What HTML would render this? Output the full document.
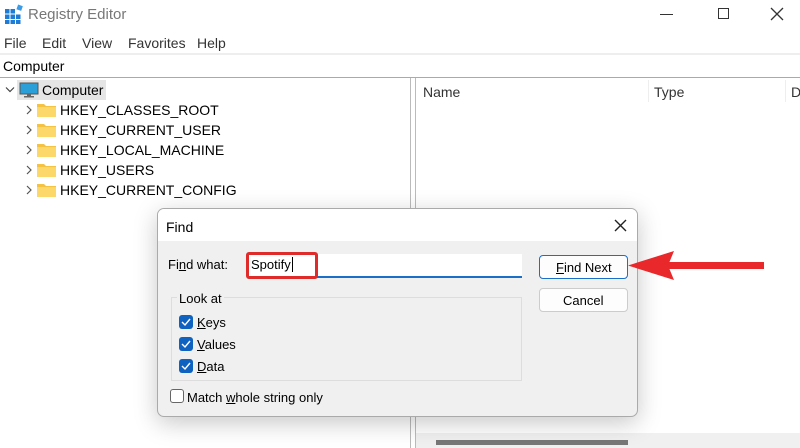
<!DOCTYPE html>
<html><head><meta charset="utf-8"><style>
*{margin:0;padding:0;box-sizing:border-box}
body{width:800px;height:448px;overflow:hidden;background:#fff;font-family:"Liberation Sans",sans-serif;position:relative;color:#000}
.a{position:absolute}
.t{font-size:14px;white-space:nowrap}
.u{text-decoration:underline}
</style></head><body>
<svg class="a" style="left:4px;top:4px" width="20" height="20" viewBox="0 0 20 20">
<g fill="#1e7bd6"><rect x="1" y="5" width="4.5" height="4.5"/><rect x="6.5" y="5" width="4.5" height="4.5"/><rect x="1" y="10.5" width="4.5" height="4.5"/><rect x="6.5" y="10.5" width="4.5" height="4.5"/><rect x="12" y="10.5" width="4.5" height="4.5"/><rect x="1" y="16" width="4.5" height="4"/><rect x="6.5" y="16" width="4.5" height="4"/><rect x="12" y="16" width="4.5" height="4"/></g>
<rect x="13" y="1" width="5" height="5" fill="#3a9be8" transform="rotate(20 15 4)"/></svg>
<div class="a t" style="left:28px;top:6px;font-size:15px;color:#777">Registry Editor</div>
<div class="a" style="left:660px;top:14px;width:13px;height:1px;background:#333"></div>
<div class="a" style="left:718px;top:8px;width:11px;height:11px;border:1px solid #333"></div>
<svg class="a" style="left:770px;top:7px" width="14" height="14"><path d="M1 1L13 13M13 1L1 13" stroke="#333" stroke-width="1.3"/></svg>
<div class="a t" style="left:4px;top:35px;color:#333">File</div>
<div class="a t" style="left:42px;top:35px;color:#333">Edit</div>
<div class="a t" style="left:82px;top:35px;color:#333">View</div>
<div class="a t" style="left:128px;top:35px;color:#333">Favorites</div>
<div class="a t" style="left:197px;top:35px;color:#333">Help</div>
<div class="a" style="left:0;top:53px;width:800px;height:2px;background:#eee"></div>
<div class="a t" style="left:3px;top:58px">Computer</div>
<div class="a" style="left:0;top:77px;width:800px;height:1px;background:#aaa"></div>
<svg class="a" style="left:5px;top:86px" width="10" height="8"><path d="M1 1.5L5 5.5L9 1.5" stroke="#444" stroke-width="1.2" fill="none"/></svg>
<div class="a" style="left:17px;top:80px;width:89px;height:20px;background:#e5e5e5"></div>
<svg class="a" style="left:19px;top:82px" width="20" height="16"><rect x="1" y="1" width="18" height="11" fill="#2a9fd8" stroke="#555" stroke-width="1"/><rect x="8" y="12" width="4" height="2" fill="#666"/><rect x="5" y="14" width="10" height="1.5" fill="#666"/></svg>
<div class="a t" style="left:42px;top:82px">Computer</div>
<div id="tree"></div>
<div class="a" style="left:410px;top:78px;width:1px;height:370px;background:#bbb"></div>
<div class="a" style="left:415px;top:78px;width:1px;height:370px;background:#bbb"></div>
<div class="a t" style="left:423px;top:84px;color:#333">Name</div>
<div class="a" style="left:648px;top:80px;width:1px;height:22px;background:#eee"></div>
<div class="a t" style="left:654px;top:84px;color:#333">Type</div>
<div class="a" style="left:785px;top:80px;width:1px;height:22px;background:#eee"></div>
<div class="a t" style="left:791px;top:84px;color:#333">D</div>
<div class="a" style="left:416px;top:433px;width:384px;height:15px;background:#f0f0f0"></div>
<div class="a" style="left:436px;top:440px;width:192px;height:5px;background:#777"></div>
<div class="a" style="left:157px;top:208px;width:481px;height:209px;background:#f0f0f0;border:1px solid #aaa;border-radius:7px;box-shadow:0 6px 24px rgba(0,0,0,.22);overflow:hidden">
 <div class="a" style="left:0;top:0;width:100%;height:32px;background:#fff"></div>
 <div class="a t" style="left:8px;top:10px">Find</div>
 <svg class="a" style="left:456px;top:10px" width="13" height="13"><path d="M1 1L12 12M12 1L1 12" stroke="#222" stroke-width="1.4"/></svg>
 <div class="a t" style="left:10px;top:48px;font-size:13px">Fi<span class="u">n</span>d what:</div>
 <div class="a" style="left:90px;top:45px;width:274px;height:24px;background:#fff;border-bottom:2px solid #1a6fc7"></div>
 <div class="a" style="left:88px;top:43px;width:72px;height:27px;border:3px solid #e02b2b;border-radius:3px"></div>
 <div class="a t" style="left:93px;top:48px;font-size:13px">Spotify<span style="border-left:1px solid #000;margin-left:1px"></span></div>
 <div class="a" style="left:13px;top:88px;width:351px;height:84px;border:1px solid #ddd"></div>
 <div class="a t" style="left:19px;top:82px;font-size:13px;background:#f0f0f0;padding:0 2px">Look at</div>
 <div id="cb"></div>
 <div class="a" style="left:12px;top:180px;width:14px;height:14px;border:1px solid #666;border-radius:3px;background:#fff"></div>
 <div class="a t" style="left:29px;top:181px;font-size:13px">Match <span class="u">w</span>hole string only</div>
 <div class="a" style="left:381px;top:46px;width:89px;height:24px;border:1px solid #1a6fc7;border-radius:4px;background:#fdfdfd"></div>
 <div class="a t" style="left:398px;top:51px;font-size:13px"><span class="u">F</span>ind Next</div>
 <div class="a" style="left:381px;top:79px;width:89px;height:24px;border:1px solid #ccc;border-radius:4px;background:#fdfdfd"></div>
 <div class="a t" style="left:405px;top:84px;font-size:13px">Cancel</div>
</div>
<svg class="a" style="left:628px;top:248px" width="140" height="36"><rect x="40" y="14" width="96" height="7" fill="#e8282b"/><polygon points="0,17.5 46,3 40,17.5 46,32" fill="#e8282b"/></svg>
<script>
var n=["HKEY_CLASSES_ROOT","HKEY_CURRENT_USER","HKEY_LOCAL_MACHINE","HKEY_USERS","HKEY_CURRENT_CONFIG"],h="";
n.forEach(function(s,i){var y=100+i*20;
h+='<svg class="a" style="left:25px;top:'+(y+5)+'px" width="8" height="10"><path d="M2 1L6 5L2 9" stroke="#555" stroke-width="1.2" fill="none"/></svg>';
h+='<svg class="a" style="left:37px;top:'+(y+3)+'px" width="19" height="14"><path d="M0 1h7l2 2h10v11H0z" fill="#f5c242"/><rect x="0" y="4" width="19" height="10" fill="#fcd86a"/></svg>';
h+='<div class="a t" style="left:60px;top:'+(y+2)+'px">'+s+'</div>';});
document.getElementById('tree').outerHTML=h;
var c=[["K","eys"],["V","alues"],["D","ata"]],g="";
c.forEach(function(s,i){var y=106+i*22;
g+='<div class="a" style="left:21px;top:'+y+'px;width:14px;height:14px;background:#0f62c0;border-radius:3px"><svg width="14" height="14"><path d="M3 7l3 3 5-6" stroke="#fff" stroke-width="1.4" fill="none"/></svg></div>';
g+='<div class="a t" style="left:39px;top:'+(y)+'px;font-size:13px"><span class="u">'+s[0]+'</span>'+s[1]+'</div>';});
document.getElementById('cb').outerHTML=g;
</script>
</body></html>
